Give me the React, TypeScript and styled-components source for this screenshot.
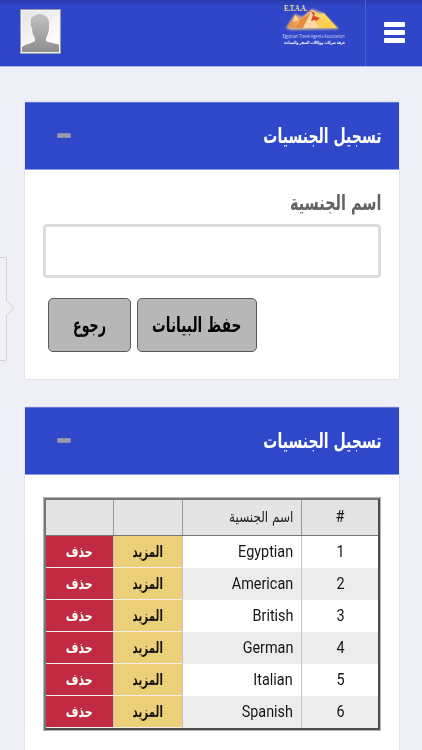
import React from 'react';
import styled, { createGlobalStyle } from 'styled-components';

const Global = createGlobalStyle`
  * { box-sizing: border-box; }
  html, body { margin: 0; padding: 0; }
  body {
    width: 422px; height: 750px; overflow: hidden; background: #eff0f7;
    font-family: Roboto, "DejaVu Sans", sans-serif;
  }
`;

const Page = styled.div`
  position: relative;
  height: 750px;
  overflow: hidden;
  direction: rtl;
  background: #eff0f7;
`;

const TopBar = styled.header`
  display: flex;
  height: 67px;
  background: linear-gradient(#293baa 0, #2f46c8 6px, #2f46c8 100%);
  border-bottom: 1px solid #a9b1e5;
`;

const MenuButton = styled.button`
  display: flex;
  flex-direction: column;
  justify-content: space-between;
  width: 57px;
  height: 66px;
  padding: 22px 17px 23px 18px;
  border: 0;
  border-left: 1px solid #4a5ed2;
  background: transparent;
`;

const Bar = styled.span`
  height: 5px;
  border-radius: 1px;
  background: #fff;
`;

const LogoLink = styled.a`
  margin-right: 16px;
  width: 68px;
  height: 50px;
`;

const LogoArt = styled.svg`
  display: block;
  overflow: visible;
`;

const Avatar = styled.div`
  margin: 9px auto 0 20px;
  width: 41px;
  height: 45px;
  border: 1px solid #979ba9;
`;

const Content = styled.main`
  display: flex;
  flex-direction: column;
  gap: 28px;
  padding: 35px 23px 0 25px;
`;

const Panel = styled.section<{ $height: number }>`
  height: ${p => p.$height}px;
  background: #fff;
  box-shadow: 0 0 2px #c9cad2;
`;

const PanelHead = styled.div`
  display: flex;
  align-items: center;
  justify-content: space-between;
  height: 68px;
  padding: 0 18px 1px 32px;
  background: #2f48ca;
  border-top: 1px solid #6475d7;
  border-bottom: 1px solid #8e9ae3;
`;

const Minus = styled.span`
  width: 14px;
  height: 5px;
  background: #999bae;
  border: 1px solid #8488a4;
  border-radius: 1px;
`;

const ArabicText = styled.span<{ $size: number; $x?: number; $y?: number; $bold?: boolean; $color: string; $origin?: string }>`
  display: inline-block;
  margin: 0;
  white-space: nowrap;
  font-family: "DejaVu Sans", sans-serif;
  font-size: ${p => p.$size}px;
  font-weight: ${p => (p.$bold ? 700 : 400)};
  line-height: 1.2;
  color: ${p => p.$color};
  transform: scale(${p => p.$x ?? 1}, ${p => p.$y ?? 1});
  transform-origin: ${p => p.$origin ?? 'right'} center;
`;

const Form = styled.form`
  display: flex;
  flex-direction: column;
  padding: 21px 18px 0;
`;

const FieldLabel = styled.label`
  height: 33px;
  line-height: 26px;
`;

const Input = styled.input`
  width: 338px;
  height: 54px;
  border: 3px solid #dcdcdc;
  border-radius: 4px;
  background: #fff;
`;

const Actions = styled.div`
  display: flex;
  justify-content: flex-end;
  gap: 6px;
  padding: 20px 0 0 5px;
`;

const Action = styled.button<{ $width: number }>`
  display: flex;
  align-items: center;
  justify-content: center;
  width: ${p => p.$width}px;
  height: 54px;
  padding: 0;
  border: 1px solid #555a5f;
  border-radius: 5px;
  background: #b7b7b7;
`;

const TableWrap = styled.div`
  margin: 22px 18px 0;
  width: 338px;
  border: 1px solid #b5b5b5;
`;

const Table = styled.div`
  display: flex;
  flex-direction: column;
  border-style: solid;
  border-width: 2px;
  border-color: #777 #4d4d4d #4d4d4d #777;
`;

const Row = styled.div<{ $head?: boolean; $odd?: boolean }>`
  display: grid;
  grid-template-columns: 77px 119px 69px 1fr;
  height: ${p => (p.$head ? 35.6 : 32.15)}px;
  background: ${p => (p.$head ? '#e4e4e4' : p.$odd ? '#ececec' : '#fff')};
  border-bottom: ${p => (p.$head ? '1px solid #777' : '0')};
`;

const Cell = styled.div<{ $head?: boolean; $name?: boolean; $fill?: string }>`
  display: flex;
  align-items: center;
  justify-content: ${p => (p.$name ? 'flex-start' : 'center')};
  padding-right: ${p => (p.$name ? 8 : 0)}px;
  background: ${p => p.$fill ?? 'transparent'};
  border-left: 1px solid ${p => (p.$head ? '#9a9a9a' : '#c4c4c4')};
  border-bottom: ${p => (p.$fill ? '1px solid #f6eeee' : '0')};
  font-size: 16px;
  color: #151515;
  &:last-child { border-left: 0; }
`;

const Latin = styled.span`
  display: inline-block;
  line-height: 20px;
  transform: scaleX(0.9);
  transform-origin: right center;
`;

const Digit = styled(Latin)`
  transform-origin: center;
`;

const SideTab = styled.svg`
  position: absolute;
  left: 0;
  top: 256px;
`;

const Logo = () => (
  <LogoArt width="68" height="50" viewBox="0 0 68 50">
    <defs>
      <linearGradient id="sand" x1="0" x2="1">
        <stop offset="0" stopColor="#e78b3c" />
        <stop offset="0.5" stopColor="#f8cf8e" />
        <stop offset="1" stopColor="#ffdf1f" />
      </linearGradient>
      <filter id="glow" x="-20%" y="-30%" width="140%" height="160%">
        <feGaussianBlur stdDeviation="1.1" />
      </filter>
    </defs>
    <text x="3" y="11" direction="ltr" fontFamily="Liberation Serif" fontWeight="700" fontSize="9" fill="#f3e59a" textLength="23" lengthAdjust="spacingAndGlyphs">E.T.A.A.</text>
    <path d="M5 28 14 14 21 17 31 9 42 13 58 29 10 30Z" fill="#ffd782" opacity=".8" filter="url(#glow)" />
    <path d="M7 26 14 15 20 19 31 10 38 14 43 13 56 28 11 28Z" fill="url(#sand)" />
    <path d="M14 15 16 20 12 22 19 21 14 28 22 28 31 11 25 16 20 19Z" fill="#e58b40" />
    <path d="M14 15 12 22 19 20ZM31 10 22 28 37 28 34 18Z" fill="#fbd8a5" />
    <path d="M30 11 34 13 33 16 39 18 37 20 44 28 40 28 34 20 30 21 32 15Z" fill="#d94a28" />
    <path d="M35 21 41 17 47 21 54 28 39 28Z" fill="#fcce56" />
    <text x="1.5" y="37.5" direction="ltr" fontFamily="Open Sans" fontSize="4.6" fill="#d3d8f3" textLength="62" lengthAdjust="spacingAndGlyphs">Egyptian Travel Agents Association</text>
    <text x="64" y="44" direction="rtl" fontFamily="DejaVu Sans" fontWeight="700" fontSize="4.2" fill="#fff" textLength="61" lengthAdjust="spacingAndGlyphs">غرفة شركات ووكالات السفر والسياحة</text>
  </LogoArt>
);

const Portrait = () => (
  <svg width="39" height="43" viewBox="0 0 39 43" display="block">
    <defs>
      <linearGradient id="back" x1="0" y1="0" x2="0.6" y2="1">
        <stop offset="0" stopColor="#e4e4e4" />
        <stop offset="1" stopColor="#fff" />
      </linearGradient>
      <linearGradient id="person" x1="0" y1="0" x2="0" y2="1">
        <stop offset="0" stopColor="#c1c1c1" />
        <stop offset="1" stopColor="#8e8e8e" />
      </linearGradient>
    </defs>
    <rect width="39" height="43" fill="#f4f4f4" />
    <rect x="1" y="1" width="37" height="41" fill="url(#back)" />
    <path d="M1 42V37C5 34 12 33 14 31V28C12 25 11 22 11 18C9 16 10 12 10 9C12 5 15 5 18 4C24 4 28 8 28 12V18C28 22 26 26 25 28V31C28 33 35 33 38 35V42Z" fill="url(#person)" />
  </svg>
);

const nationalities = ['Egyptian', 'American', 'British', 'German', 'Italian', 'Spanish'];

const Heading = () => (
  <PanelHead>
    <ArabicText as="h2" $size={18} $bold $x={0.78} $y={1.14} $color="#fff">تسجيل الجنسيات</ArabicText>
    <Minus />
  </PanelHead>
);

export default function App() {
  return (
    <Page>
      <Global />
      <TopBar>
        <MenuButton aria-label="menu"><Bar /><Bar /><Bar /></MenuButton>
        <LogoLink><Logo /></LogoLink>
        <Avatar><Portrait /></Avatar>
      </TopBar>
      <Content>
        <Panel $height={277}>
          <Heading />
          <Form>
            <FieldLabel htmlFor="nationality">
              <ArabicText $size={19} $bold $x={0.76} $y={1.12} $color="#626466">اسم الجنسية</ArabicText>
            </FieldLabel>
            <Input id="nationality" />
            <Actions>
              <Action type="button" $width={120}>
                <ArabicText $size={18} $bold $x={0.76} $y={1.14} $color="#050505" $origin="center">حفظ البيانات</ArabicText>
              </Action>
              <Action type="button" $width={83}>
                <ArabicText $size={18} $bold $x={0.7} $y={1.14} $color="#050505" $origin="center">رجوع</ArabicText>
              </Action>
            </Actions>
          </Form>
        </Panel>
        <Panel $height={400}>
          <Heading />
          <TableWrap>
            <Table>
              <Row $head>
                <Cell $head><Digit>#</Digit></Cell>
                <Cell $head $name><ArabicText $size={15} $x={0.8} $color="#222">اسم الجنسية</ArabicText></Cell>
                <Cell $head />
                <Cell $head />
              </Row>
              {nationalities.map((name, i) => (
                <Row key={name} $odd={i % 2 === 1}>
                  <Cell><Digit>{i + 1}</Digit></Cell>
                  <Cell $name><Latin>{name}</Latin></Cell>
                  <Cell $fill="#ebd079"><ArabicText $size={14} $bold $x={0.73} $y={1.12} $color="#171307" $origin="center">المزيد</ArabicText></Cell>
                  <Cell $fill="#c02a43"><ArabicText $size={14} $bold $x={0.78} $y={1.12} $color="#fff" $origin="center">حذف</ArabicText></Cell>
                </Row>
              ))}
            </Table>
          </TableWrap>
        </Panel>
      </Content>
      <SideTab width="16" height="106" viewBox="0 0 16 106">
        <path d="M0 1.5H4.5Q6.5 1.5 6.5 3.5V44L13.5 52 6.5 60V102.5Q6.5 104.5 4.5 104.5H0" fill="#f0f0f5" stroke="#cfcfd5" />
      </SideTab>
    </Page>
  );
}
